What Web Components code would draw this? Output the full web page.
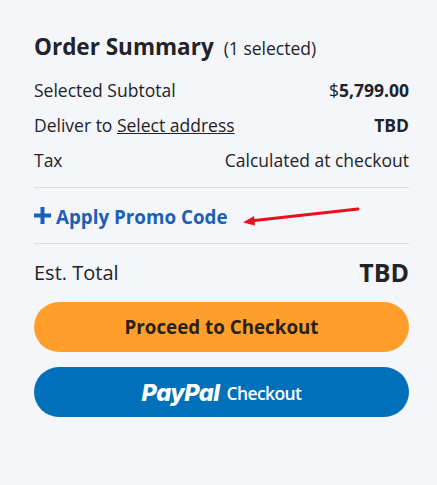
<!DOCTYPE html>
<html>
<head>
<meta charset="utf-8">
<style>
    html, body { margin: 0; background: #f5f6fa; }
    body { font-family: "Open Sans", sans-serif; color: #212328; }
</style>
</head>
<body>
<order-summary>
    <summary-row>
        <span slot="label">Selected Subtotal</span>
        <span>$<b>5,799.00</b></span>
    </summary-row>
    <summary-row>
        <span slot="label">Deliver to <u>Select address</u></span>
        <b>TBD</b>
    </summary-row>
    <summary-row>
        <span slot="label">Tax</span>
        <span>Calculated at checkout</span>
    </summary-row>
</order-summary>

<script>
class SummaryRow extends HTMLElement {
    constructor() {
        super();
        this.attachShadow({mode: 'open'});
        this.shadowRoot.innerHTML = `
            <style>
                :host { display: flex; justify-content: space-between; align-items: center; height: 35px; font-size: 17.5px; }
            </style>
            <slot name="label"></slot>
            <slot></slot>
        `;
    }
}

class PromoLink extends HTMLElement {
    constructor() {
        super();
        this.attachShadow({mode: 'open'});
        this.shadowRoot.innerHTML = `
            <style>
                :host { display: flex; align-items: center; gap: 5px; position: relative; height: 55px; color: #1a5fb8; font-size: 18.8px; font-weight: 700; }
                svg.plus { width: 17px; height: 17px; }
                span { padding-top: 2px; }
                svg.arrow { position: absolute; left: 200px; top: 14px; width: 130px; height: 24px; }
            </style>
            <svg class="plus" viewBox="0 0 17 17"><path d="M0 8.5h17M8.5 0v17" stroke="#1a5fb8" stroke-width="4" fill="none"/></svg>
            <span>Apply Promo Code</span>
            <svg class="arrow" viewBox="0 0 130 24">
                <path d="M124 7L16 19" stroke="#e8101c" stroke-width="3" stroke-linecap="round" fill="none"/>
                <path d="M9 20.5L20 14L21 23.5Z" fill="#e8101c"/>
            </svg>
        `;
    }
}

class PillButton extends HTMLElement {
    constructor() {
        super();
        this.attachShadow({mode: 'open'});
        this.shadowRoot.innerHTML = `
            <style>
                :host { display: flex; align-items: center; justify-content: center; height: 50px; border-radius: 25px; background: var(--pill-bg); color: var(--pill-fg); }
            </style>
            <slot></slot>
        `;
    }
}

class OrderSummary extends HTMLElement {
    constructor() {
        super();
        this.attachShadow({mode: 'open'});
        this.shadowRoot.innerHTML = `
            <style>
                :host { display: block; width: 375px; padding: 31px 28px 0 34px; }
                header { display: flex; align-items: baseline; gap: 10px; height: 40px; margin-bottom: 1px; }
                h2 { margin: 0; font-size: 22.5px; font-weight: 700; }
                header span { font-size: 17.5px; }
                .rule { height: 1px; background: #dcdde1; margin-top: 10px; }
                .rule + promo-link + .rule { margin-top: 0; }
                .total { display: flex; justify-content: space-between; align-items: center; height: 56px; padding-bottom: 2px; font-size: 20px; }
                .total b { font-size: 25px; }
                .buttons { display: flex; flex-direction: column; gap: 15px; }
                .proceed { --pill-bg: #ff9e2a; --pill-fg: #2a2118; font-size: 18.8px; font-weight: 700; }
                .paypal { --pill-bg: #0070ba; --pill-fg: #fff; gap: 7px; }
                .paypal i { font-family: Inter, sans-serif; font-size: 23.5px; font-weight: 800; letter-spacing: -0.5px; }
                .paypal span { font-size: 17.5px; font-weight: 600; letter-spacing: -0.6px; padding-top: 1px; }
            </style>
            <header><h2>Order Summary</h2><span>(1 selected)</span></header>
            <slot></slot>
            <div class="rule"></div>
            <promo-link></promo-link>
            <div class="rule"></div>
            <div class="total"><span>Est. Total</span><b>TBD</b></div>
            <div class="buttons">
                <pill-button class="proceed">Proceed to Checkout</pill-button>
                <pill-button class="paypal"><i>PayPal</i><span>Checkout</span></pill-button>
            </div>
        `;
    }
}

window.customElements.define('summary-row', SummaryRow);
window.customElements.define('promo-link', PromoLink);
window.customElements.define('pill-button', PillButton);
window.customElements.define('order-summary', OrderSummary);
</script>
</body>
</html>
